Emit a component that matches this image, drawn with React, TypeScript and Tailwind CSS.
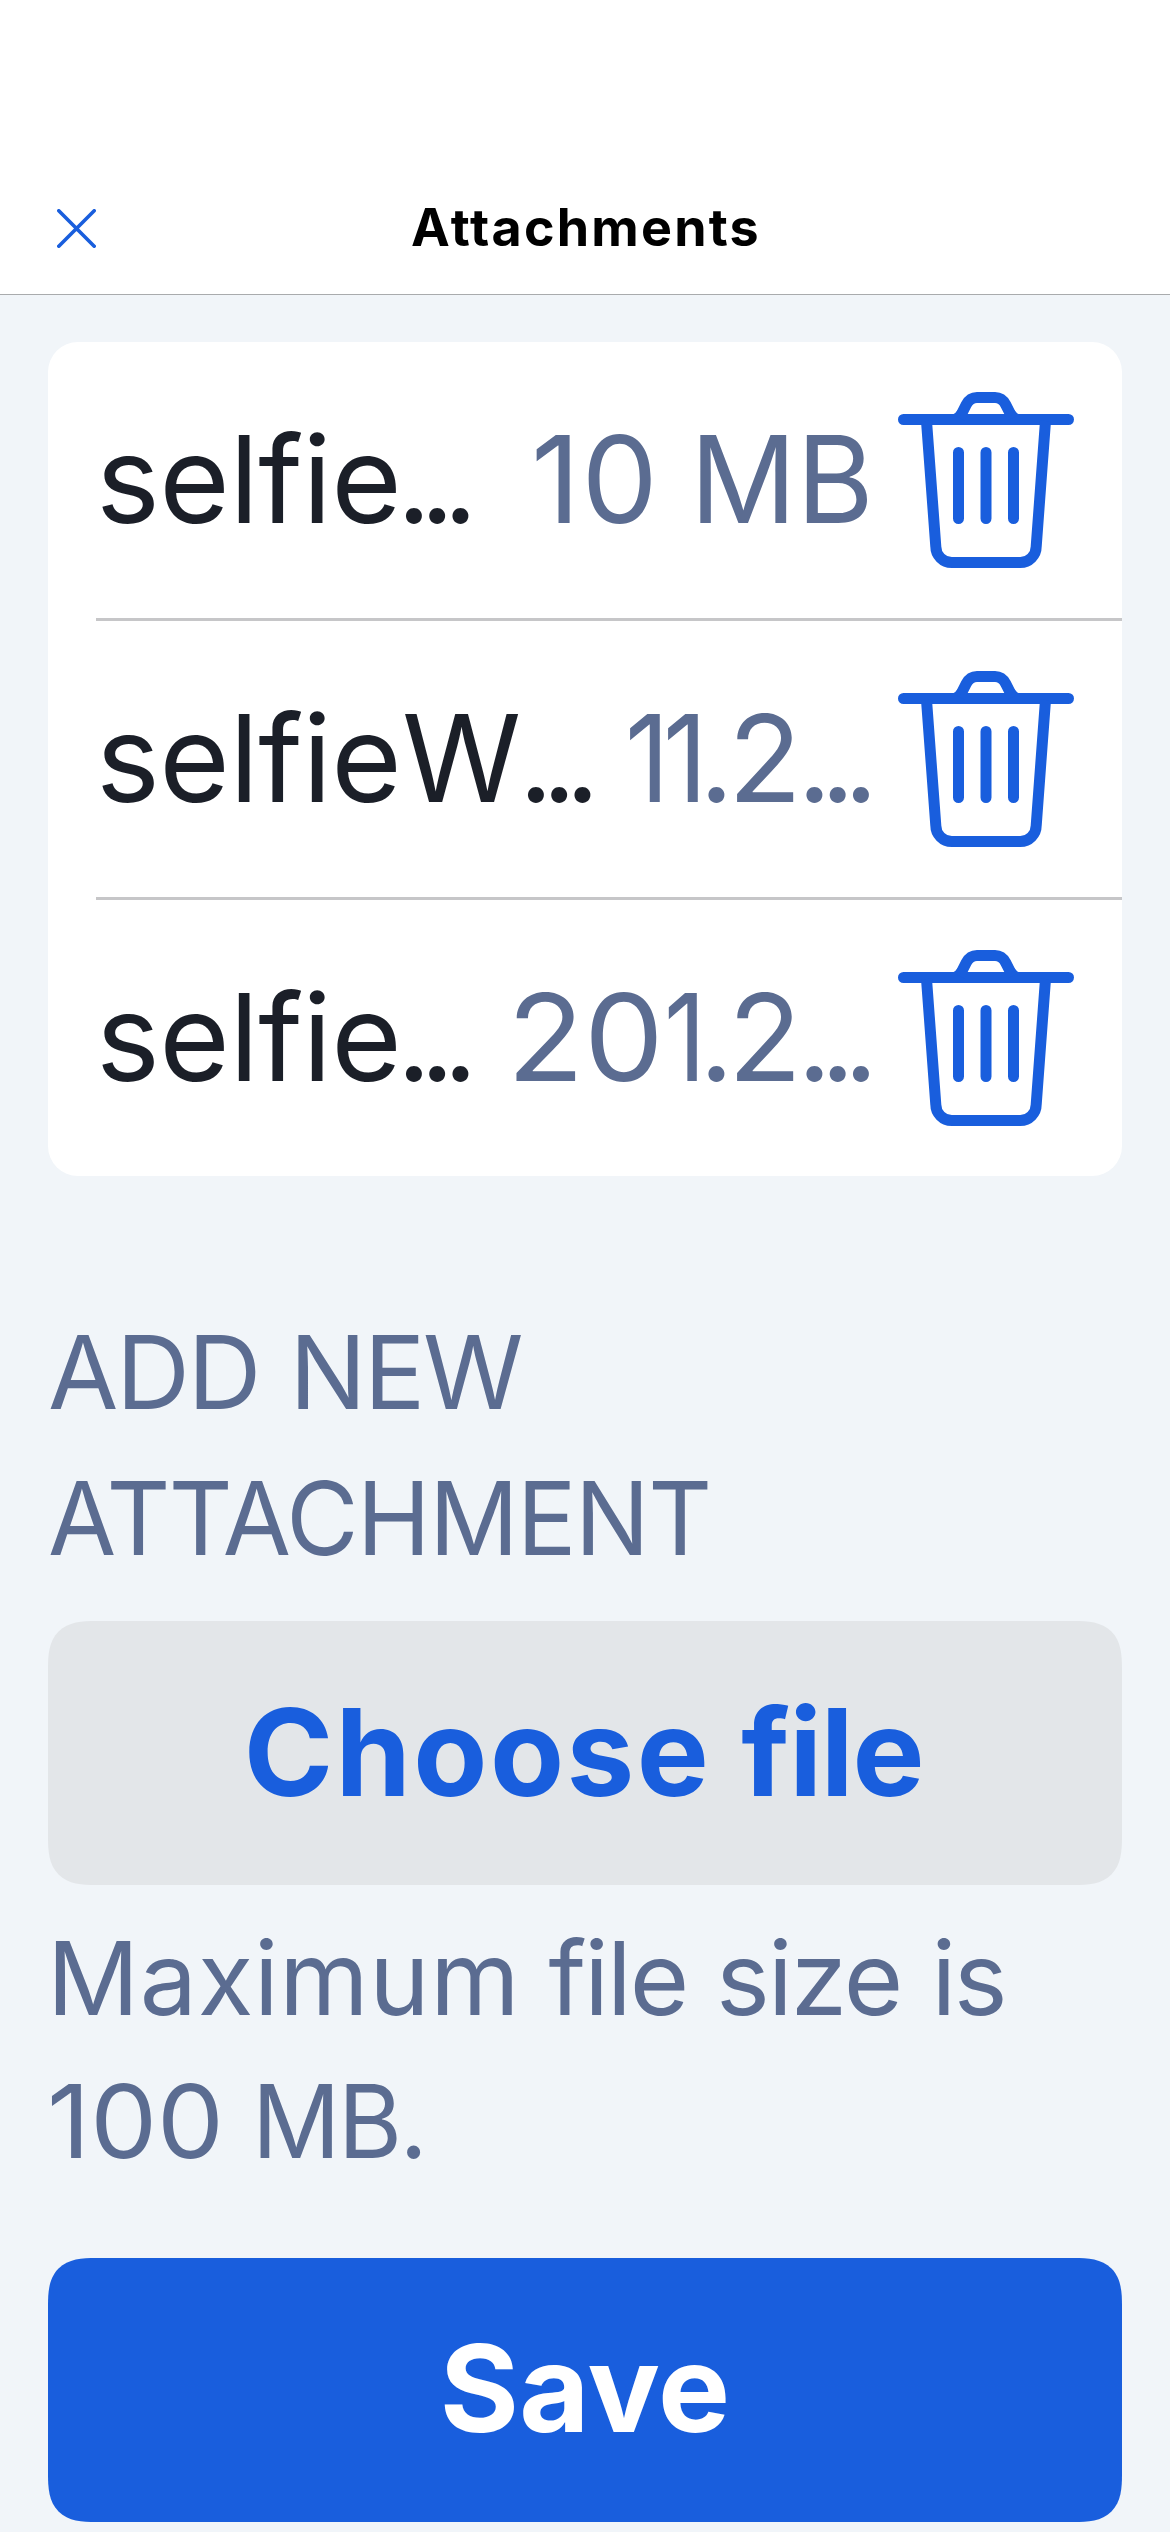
import React from "react";

function CloseIcon() {
  return (
    <svg className="h-[39px] w-[39px]" viewBox="0 0 39 39" fill="none" stroke="#195edd" strokeWidth="3.6" strokeLinecap="round">
      <path d="M1.8 1.8 37.2 37.2M37.2 1.8 1.8 37.2" />
    </svg>
  );
}

function TrashIcon() {
  return (
    <svg className="h-[176px] w-[176px]" viewBox="0 0 176 176" fill="none" stroke="#195edd" strokeWidth="11">
      <path d="M5.5 27.5H170.5" strokeLinecap="round" />
      <path d="M61.5 26 68.3 12.6Q72 5.5 79 5.5H97Q104 5.5 107.7 12.6L114.5 26" />
      <path d="M54 22.4Q57.5 22 59.5 18L63 24H54ZM122 22.4Q118.5 22 116.5 18L113 24H122Z" fill="#195edd" stroke="none" />
      <path d="M28.5 29 37.8 154.5A16 16 0 0 0 53.7 170.5H122.3A16 16 0 0 0 138.2 154.5L147.5 29" />
      <path d="M60.5 60.5V126.5M88 60.5V126.5M115.5 60.5V126.5" strokeLinecap="round" />
    </svg>
  );
}

function Row({ children, last = false }: { children: React.ReactNode; last?: boolean }) {
  return (
    <li className="pl-12">
      <div className={last ? "flex h-[276px] pr-12" : "flex h-[279px] border-b-[3px] border-[#c6c6c8] pr-12"}>
        <div className="flex h-[274px] w-[802px] items-baseline whitespace-pre text-[121px] leading-[274px] text-[#5b6c91]">
          {children}
        </div>
        <button className="mt-[50px] h-[176px]" aria-label="Delete">
          <TrashIcon />
        </button>
      </div>
    </li>
  );
}

export default function App() {
  return (
    <div className="h-[2532px] w-[1170px] overflow-hidden bg-[#f1f5f9] font-['Inter',sans-serif]">
      <header className="grid h-[295px] grid-cols-[96px_1fr_96px] items-center border-b border-[#a9abad] bg-white pt-[164px]">
        <button className="-mt-[2px] pl-[57px]" aria-label="Close">
          <CloseIcon />
        </button>
        <h1 className="pb-[3px] pl-[2px] text-center text-[52px] leading-[126px] font-[650] tracking-[2.2px] text-black">Attachments</h1>
      </header>

      <main className="px-12 pt-[47px]">
        <ul className="rounded-[30px] bg-white">
          <Row>
            <span className="w-[300.5px] tracking-[-0.5px] text-[#1b1f28]">selfie</span>
            <span className="w-[134.5px] tracking-[-11.6px] text-[#1b1f28]">...</span>
            <span className="w-[159px] tracking-[1.4px]">10 </span>
            <span className="origin-left scale-x-[0.975]">MB</span>
          </Row>
          <Row>
            <span className="w-[306px] tracking-[-0.5px] text-[#1b1f28]">selfie</span>
            <span className="w-[116.5px] text-[#1b1f28]">W</span>
            <span className="w-[106.5px] tracking-[-11.6px] text-[#1b1f28]">...</span>
            <span className="w-[74px] origin-left scale-x-[0.9] tracking-[-7px]">11</span>
            <span className="w-[29px]">.</span>
            <span className="w-[69px]">2</span>
            <span className="w-0 tracking-[-11.6px]">...</span>
          </Row>
          <Row last>
            <span className="w-[300.5px] tracking-[-0.5px] text-[#1b1f28]">selfie</span>
            <span className="w-[110.5px] tracking-[-11.6px] text-[#1b1f28]">...</span>
            <span className="w-[157px] origin-left scale-x-[1.045]">20</span>
            <span className="w-[35px] origin-left scale-x-[0.85] tracking-[-7px]">1</span>
            <span className="w-[29px]">.</span>
            <span className="w-[69px]">2</span>
            <span className="w-0 tracking-[-11.6px]">...</span>
          </Row>
        </ul>

        <h2 className="mt-[123px] text-[102px] leading-[146px] text-[#5b6c91]">
          <span className="flex whitespace-pre">
            <span className="w-[241.5px] tracking-[-2.1px]">ADD </span>
            <span className="tracking-[-2.3px]">NEW</span>
          </span>
          <span className="block origin-left scale-x-[0.97] tracking-[-1.5px]">ATTACHMENT</span>
        </h2>

        <button className="mt-[30px] flex h-[264px] w-full justify-center rounded-[38px] bg-[#e3e6e9] text-[121px] leading-[262px] font-[660] whitespace-pre text-[#195edd] [corner-shape:superellipse(1.48)] supports-[corner-shape:squircle]:rounded-[48px]">
          <span className="w-[497.6px] text-left tracking-[2.4px]">Choose </span>
          <span className="w-[185px] text-left tracking-[-1.2px]">file</span>
        </button>

        <p className="mt-[22px] text-[102px] leading-[143px] text-[#5b6c91]">
          <span className="-ml-px flex whitespace-pre">
            <span className="w-[501.5px] tracking-[0.64px]">Maximum </span>
            <span className="w-[167.5px] tracking-[-2px]">file </span>
            <span className="w-[215.5px] tracking-[-1.9px]">size </span>
            <span className="tracking-[-2.5px]">is</span>
          </span>
          <span className="-ml-px flex whitespace-pre">
            <span className="w-[205.2px] origin-left scale-x-[1.04]">100 </span>
            <span className="origin-left scale-x-[0.96] tracking-[-2.6px]">MB.</span>
          </span>
        </p>

        <button className="mt-[65px] flex h-[264px] w-full justify-center rounded-[38px] bg-[#195edd] text-[121px] leading-[260px] font-[660] tracking-[0.1px] text-white [corner-shape:superellipse(1.48)] supports-[corner-shape:squircle]:rounded-[48px]">
          Save
        </button>
      </main>
    </div>
  );
}
